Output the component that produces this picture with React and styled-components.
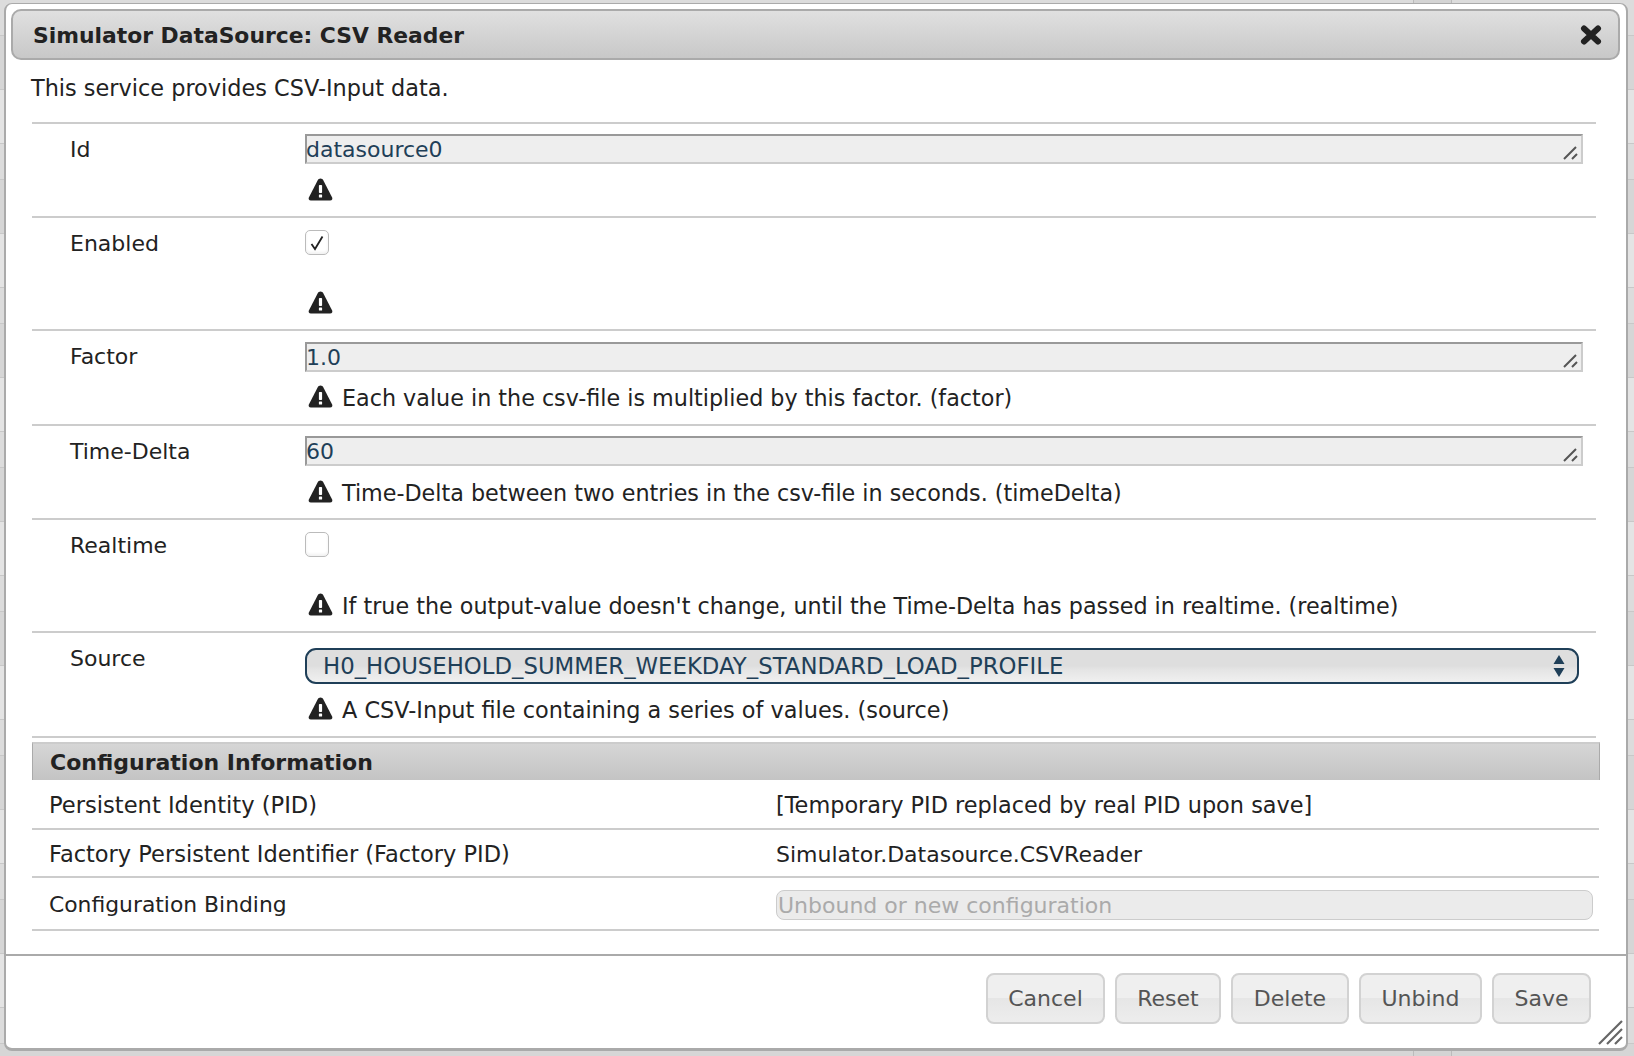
import styled, { createGlobalStyle } from 'styled-components';

const GlobalStyle = createGlobalStyle`
	html, body {
		margin: 0;
		padding: 0;
		background: #e6e6e6;
	}
	body {
		width: 1634px;
		height: 1056px;
		overflow: hidden;
		font-family: "DejaVu Sans", Verdana, sans-serif;
		font-size: 22px;
		color: #222;
	}
`;

// the table behind the dialog only shows in the thin strips round it
const Page = styled.div`
	position: relative;
	padding: 3px 6px 5px 4px;
	box-sizing: border-box;
	height: 1056px;
	background: repeating-linear-gradient(
		#dcdcdc 0,
		#dcdcdc 35px,
		#c8c8c8 35px,
		#c8c8c8 36px,
		#d6d6d6 36px,
		#d6d6d6 89px,
		#c8c8c8 89px,
		#c8c8c8 90px,
		#e4e4e4 90px,
		#e4e4e4 143px,
		#c8c8c8 143px,
		#c8c8c8 144px
	);
`;

const BackCell = styled.div`
	position: absolute;
	left: 1413px;
	top: ${(p) => p.$top}px;
	width: 37px;
	height: ${(p) => p.$height}px;
	background: #d4d4d4;
	border-left: 1px solid #bbb;
	border-right: 1px solid #bbb;
`;

const Dialog = styled.div`
	position: relative;
	box-sizing: border-box;
	height: 1048px;
	padding: 5px 6px 6px 5px;
	background: #fff;
	border-style: solid;
	border-color: #aaa;
	border-width: 1px 2px 3px 2px;
	border-radius: 8px;
	display: flex;
	flex-direction: column;
`;

const TitleBar = styled.div`
	box-sizing: border-box;
	height: 51px;
	flex: none;
	display: flex;
	align-items: center;
	justify-content: space-between;
	padding: 0 16px 0 20px;
	background: linear-gradient(#e0e0e0, #c8c8c8);
	border: 2px solid #aaa;
	border-radius: 10px;
	font-size: 21.85px;
	font-weight: bold;
`;

const TitleText = styled.span`
	padding-top: 2px;
`;

const Description = styled.p`
	margin: 0;
	padding: 15px 0 0 20px;
	height: 62px;
	box-sizing: border-box;
	flex: none;
	font-size: 22.4px;
	line-height: 26px;
`;

const Content = styled.div`
	margin: 0 24px 0 21px;
`;

const Row = styled.div`
	box-sizing: border-box;
	height: ${(p) => p.$height}px;
	border-top: 2px solid #ccc;
	display: flex;
	padding-top: 10px;
`;

const RowLabel = styled.div`
	width: 273px;
	flex: none;
	padding: 3px 0 0 38px;
	box-sizing: border-box;
	line-height: 26px;
`;

const RowField = styled.div`
	flex: 1;
	min-width: 0;
	padding-right: 13px;
	padding-top: ${(p) => p.$offset || 0}px;
	display: flex;
	flex-direction: column;
`;

const TextInput = styled.div`
	position: relative;
	box-sizing: border-box;
	height: 30px;
	text-indent: -1px;
	background: #eee;
	border: 2px solid #ccc;
	border-top-color: #999;
	border-left-color: #999;
	color: #1f3f58;
	line-height: 28px;
`;

const ResizeGrip = styled.svg`
	position: absolute;
	right: 2px;
	bottom: 2px;
`;

const CheckBox = styled.div`
	box-sizing: border-box;
	width: 24px;
	height: 25px;
	margin-top: 2px;
	display: flex;
	align-items: center;
	justify-content: center;
	background: #fff;
	border: 1px solid #bbb;
	border-radius: 5px;
	box-shadow: inset 0 -2px 3px rgba(0, 0, 0, 0.06);
`;

const Hint = styled.div`
	display: flex;
	align-items: center;
	gap: 9px;
	height: 26px;
	margin-top: ${(p) => p.$gap}px;
	padding-left: 3px;
	font-size: ${(p) => p.$size || 22.25}px;
	line-height: 26px;
`;

const WarnSvg = styled.svg`
	flex: none;
	margin-bottom: 4px;
`;

const SelectBox = styled.div`
	box-sizing: border-box;
	height: 36px;
	width: 1274px;
	margin-top: 5px;
	padding: 0 12px 0 16px;
	display: flex;
	align-items: center;
	justify-content: space-between;
	color: #1f3f58;
	font-size: 22.8px;
	background: linear-gradient(#dedede 50%, #e4e4e4 60%, #f0f0f0);
	border: 2px solid #1f3f58;
	border-radius: 11px;
`;

const ConfigSection = styled.div`
	border-top: 2px solid #ccc;
	padding-top: 4px;
`;

const SectionHeader = styled.div`
	box-sizing: border-box;
	height: 38px;
	margin-right: -4px;
	padding-left: 17px;
	background: linear-gradient(#d6d6d6, #c4c4c4);
	border-top: 2px solid #ccc;
	border-left: 1px solid #aaa;
	border-right: 1px solid #aaa;
	font-weight: bold;
	line-height: 38px;
`;

const InfoRow = styled.div`
	box-sizing: border-box;
	height: ${(p) => p.$height}px;
	display: flex;
	align-items: center;
	padding: 2px 0 0 17px;
	margin-right: -3px;
	border-bottom: 2px solid #ccc;
`;

const InfoLabel = styled.div`
	width: 727px;
	flex: none;
	font-size: ${(p) => p.$size}px;
`;

const InfoValue = styled.div`
	font-size: ${(p) => p.$size}px;
`;

const BindingInput = styled.div`
	box-sizing: border-box;
	width: 817px;
	height: 30px;
	padding-left: 1px;
	color: #aaa;
	background: #ebebeb;
	border: 1px solid #ccc;
	border-radius: 8px;
	font-size: 22px;
	line-height: 29px;
`;

const Footer = styled.div`
	margin: auto -6px 0 -5px;
	border-top: 2px solid #aaa;
	padding: 17px 35px 0 0;
	height: 88px;
	box-sizing: border-box;
	display: flex;
	justify-content: flex-end;
	gap: 10px;
`;

const Button = styled.button`
	box-sizing: border-box;
	width: ${(p) => p.$width}px;
	height: 51px;
	padding: 0;
	font: inherit;
	color: #555;
	background: linear-gradient(#efefef 50%, #e6e6e6 50%, #ededed);
	border: 2px solid #d2d2d2;
	border-radius: 8px;
`;

const CornerGrip = styled.svg`
	position: absolute;
	right: 3px;
	bottom: 3px;
`;

function WarnIcon() {
	return (
		<WarnSvg width="25" height="23" viewBox="0 0 25 23">
			<path
				d="M12.500 .500c1.300 0 2.200.7 2.900 1.900l8.600 16.800c.9 1.800.1 3.300-1.900 3.300H2.900c-2 0-2.800-1.500-1.900-3.300L9.600 2.400C10.300 1.200 11.200.5 12.500.5z"
				fill="#222"
			/>
			<rect x="10.900" y="7" width="3.200" height="8" rx="0.800" fill="#fff" />
			<rect x="10.900" y="16.500" width="3.200" height="3" rx="0.600" fill="#fff" />
		</WarnSvg>
	);
}

function InputGrip() {
	return (
		<ResizeGrip width="16" height="14" viewBox="0 0 16 14">
			<path d="M1 13 13 1M9 13l5-5" stroke="#555" strokeWidth="2" fill="none" />
		</ResizeGrip>
	);
}

const formRows = [
	{ label: 'Id', height: 94, kind: 'input', value: 'datasource0', gap: 14 },
	{ label: 'Enabled', height: 113, kind: 'check', checked: true, gap: 36 },
	{ label: 'Factor', height: 95, kind: 'input', value: '1.0', offset: 1, gap: 13, hint: 'Each value in the csv-file is multiplied by this factor. (factor)' },
	{ label: 'Time-Delta', height: 94, kind: 'input', value: '60', gap: 14, hint: 'Time-Delta between two entries in the csv-file in seconds. (timeDelta)' },
	{ label: 'Realtime', height: 113, kind: 'check', gap: 36, hint: "If true the output-value doesn't change, until the Time-Delta has passed in realtime. (realtime)" },
	{ label: 'Source', height: 105, kind: 'select', value: 'H0_HOUSEHOLD_SUMMER_WEEKDAY_STANDARD_LOAD_PROFILE', gap: 13, hintSize: 22.4, hint: 'A CSV-Input file containing a series of values. (source)' },
];

const buttons = [
	{ text: 'Cancel', width: 119 },
	{ text: 'Reset', width: 106 },
	{ text: 'Delete', width: 118 },
	{ text: 'Unbind', width: 123 },
	{ text: 'Save', width: 99 },
];

function App() {
	return (
		<Page>
			<GlobalStyle />
			<BackCell $top={0} $height={4} />
			<BackCell $top={1048} $height={8} />
			<Dialog>
				<TitleBar>
					<TitleText>Simulator DataSource: CSV Reader</TitleText>
					<svg width="22" height="20" viewBox="0 0 22 20">
						<path d="M4 3.500l14 13M18 3.500l-14 13" stroke="#222" strokeWidth="6" strokeLinecap="round" />
					</svg>
				</TitleBar>
				<Description>This service provides CSV-Input data.</Description>
				<Content>
					{formRows.map((row) => (
						<Row key={row.label} $height={row.height}>
							<RowLabel>{row.label}</RowLabel>
							<RowField $offset={row.offset}>
								{row.kind === 'input' && (
									<TextInput>
										{row.value}
										<InputGrip />
									</TextInput>
								)}
								{row.kind === 'check' && (
									<CheckBox>
										{row.checked && (
											<svg width="18" height="18" viewBox="0 0 18 18">
												<path d="M3.500 10l3.500 5L14.500 2.500" stroke="#222" strokeWidth="1.800" fill="none" />
											</svg>
										)}
									</CheckBox>
								)}
								{row.kind === 'select' && (
									<SelectBox>
										{row.value}
										<svg width="12" height="22" viewBox="0 0 12 22">
											<path d="M6 0l5.500 9H.500zM6 22 .500 13h11z" fill="#1f3f58" />
										</svg>
									</SelectBox>
								)}
								<Hint $gap={row.gap} $size={row.hintSize}>
									<WarnIcon />
									{row.hint}
								</Hint>
							</RowField>
						</Row>
					))}
					<ConfigSection>
						<SectionHeader>Configuration Information</SectionHeader>
						<InfoRow $height={50}>
							<InfoLabel $size={22.6}>Persistent Identity (PID)</InfoLabel>
							<InfoValue $size={22.4}>[Temporary PID replaced by real PID upon save]</InfoValue>
						</InfoRow>
						<InfoRow $height={48}>
							<InfoLabel $size={22.5}>Factory Persistent Identifier (Factory PID)</InfoLabel>
							<InfoValue $size={22}>Simulator.Datasource.CSVReader</InfoValue>
						</InfoRow>
						<InfoRow $height={53}>
							<InfoLabel $size={21.85}>Configuration Binding</InfoLabel>
							<BindingInput>Unbound or new configuration</BindingInput>
						</InfoRow>
					</ConfigSection>
				</Content>
				<Footer>
					{buttons.map((b) => (
						<Button key={b.text} $width={b.width}>{b.text}</Button>
					))}
				</Footer>
				<CornerGrip width="26" height="26" viewBox="0 0 26 26">
					<path d="M2 25 25 2M10 25 25 10M18 25l7-7" stroke="#666" strokeWidth="2.200" fill="none" />
				</CornerGrip>
			</Dialog>
		</Page>
	);
}

export default App;
